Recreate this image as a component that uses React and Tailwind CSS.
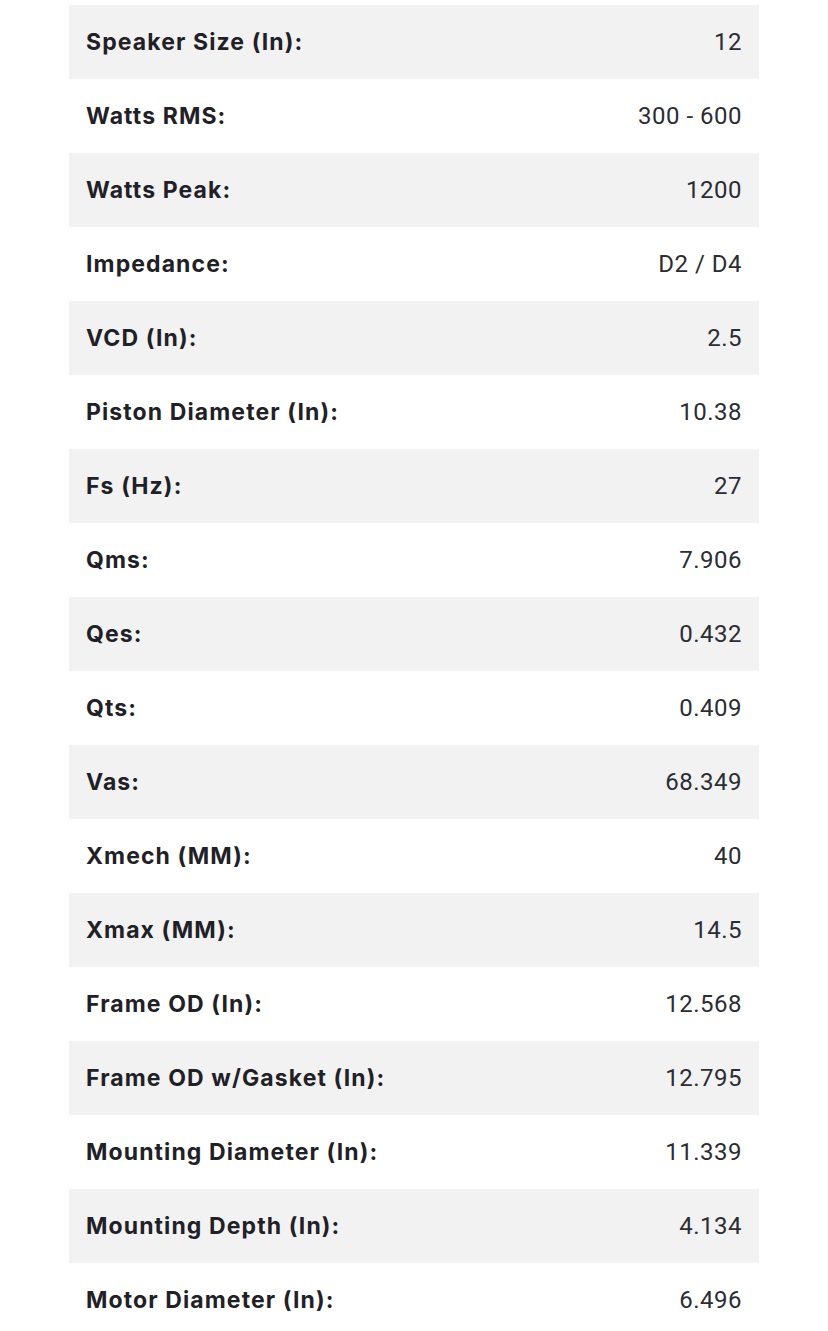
import React from "react";

const specs = [
  ["Speaker Size (In):", "12"],
  ["Watts RMS:", "300 - 600"],
  ["Watts Peak:", "1200"],
  ["Impedance:", "D2 / D4"],
  ["VCD (In):", "2.5"],
  ["Piston Diameter (In):", "10.38"],
  ["Fs (Hz):", "27"],
  ["Qms:", "7.906"],
  ["Qes:", "0.432"],
  ["Qts:", "0.409"],
  ["Vas:", "68.349"],
  ["Xmech (MM):", "40"],
  ["Xmax (MM):", "14.5"],
  ["Frame OD (In):", "12.568"],
  ["Frame OD w/Gasket (In):", "12.795"],
  ["Mounting Diameter (In):", "11.339"],
  ["Mounting Depth (In):", "4.134"],
  ["Motor Diameter (In):", "6.496"],
];

const App = () => {
  return (
    <div className="min-h-screen bg-white pt-[5px]">
      <div className="mx-[69px] w-[690px]">
        {specs.map(([label, value], i) => (
          <div
            key={label}
            className={`flex h-[74px] items-center justify-between px-[17px] ${
              i % 2 === 0 ? "bg-[#f2f2f2]" : "bg-white"
            }`}
          >
            <span className="font-['Inter',sans-serif] text-[23px] font-bold tracking-[1.1px] text-[#1f2127]">
              {label}
            </span>
            <span className="font-['Roboto',sans-serif] text-[24px] tracking-[0.5px] text-[#2b2d33]">
              {value}
            </span>
          </div>
        ))}
      </div>
    </div>
  );
};

export default App;
